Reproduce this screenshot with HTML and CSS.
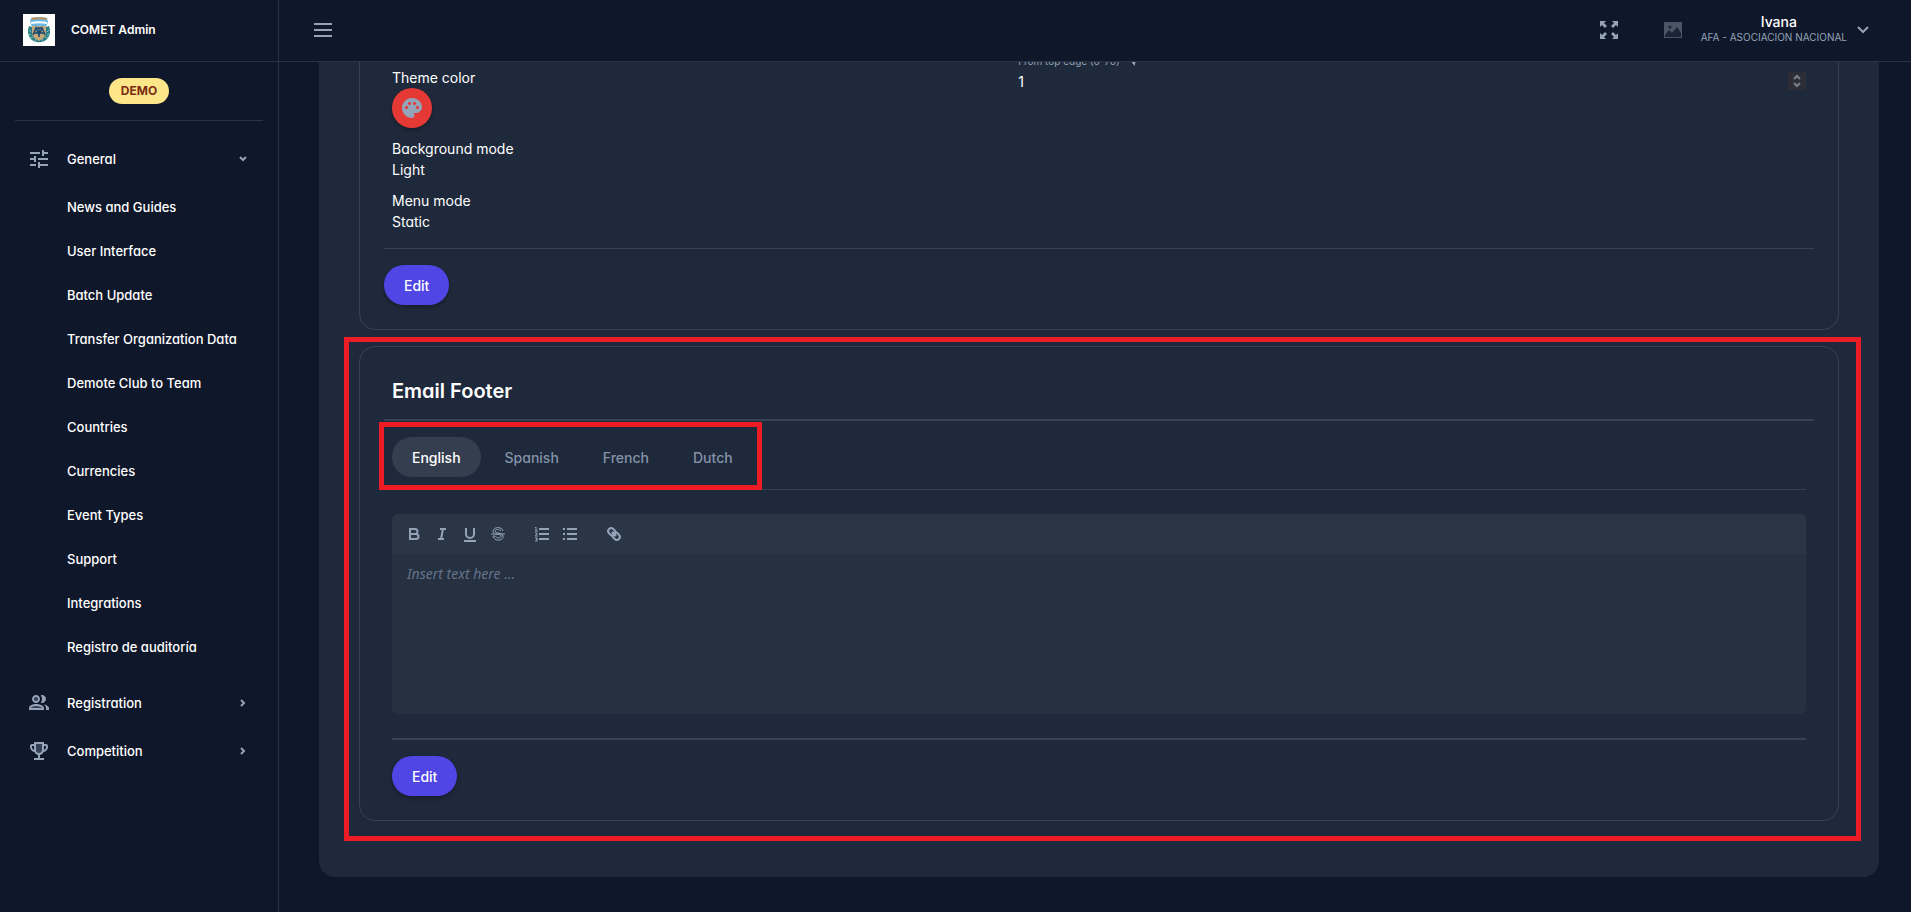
FILE: index.html
```html
<!DOCTYPE html>
<html lang="en">
<head>
    <meta charset="UTF-8">
    <meta name="viewport" content="width=device-width, initial-scale=1.0">
    <title>COMET Admin</title>
    <link rel="stylesheet" href="styles.css">
</head>
<body>
    <aside class="sidebar">
        <div class="brand">
            <svg class="brand-logo" viewBox="0 0 32 32">
                <rect width="32" height="32" fill="#fff"/>
                <path d="M6 12c-2 5-1 11 3 14 4 3 10 3 14 0 4-3 5-9 3-14l-3 1H9z" fill="#2b7f86"/>
                <path d="M8 4c3-1 13-1 16 0l1 4-2 5H9L7 8z" fill="#6db9e4"/>
                <path d="M8 4c3-1 13-1 16 0l-1 2c-4-1-10-1-14 0z" fill="#b8925a"/>
                <path d="M8 8c5-1 11-1 16 0v2c-5-1-11-1-16 0z" fill="#fff"/>
                <path d="M9 12h14v7c0 4-4 6-7 8-3-2-7-4-7-8z" fill="#c6a77a"/>
                <path d="M10 21l3-7 3 7M11 19h4M13 14h6M16 14v9M16 21l3-7 3 7M17 19h4" stroke="#174a73" stroke-width="1.5" fill="none"/>
                <path d="M6 16l2 2M5 20l3 1M7 24l3-1M12 27l1-2M20 27l-1-2M25 24l-3-1M27 20l-3 1M26 16l-2 2" stroke="#79bdbb" fill="none"/>
            </svg>
            <span class="brand-name">COMET Admin</span>
        </div>
        <div class="env"><span class="badge">DEMO</span></div>
        <nav class="menu">
            <button class="menu-group">
                <svg class="icon" viewBox="0 0 24 24"><path d="M3 17v2h6v-2H3zM3 5v2h10V5H3zm10 16v-2h8v-2h-8v-2h-2v6h2zM7 9v2H3v2h4v2h2V9H7zm14 4v-2H11v2h10zm-6-4h2V7h4V5h-4V3h-2v6z"/></svg>
                <span>General</span>
                <svg class="arrow" viewBox="0 0 16 16"><path d="M5 6l3 3 3-3"/></svg>
            </button>
            <div class="submenu">
                <a href="#">News and Guides</a>
                <a href="#">User Interface</a>
                <a href="#">Batch Update</a>
                <a href="#">Transfer Organization Data</a>
                <a href="#">Demote Club to Team</a>
                <a href="#">Countries</a>
                <a href="#">Currencies</a>
                <a href="#">Event Types</a>
                <a href="#">Support</a>
                <a href="#">Integrations</a>
                <a href="#">Registro de auditoría</a>
            </div>
            <button class="menu-group">
                <svg class="icon" viewBox="0 0 24 24"><circle cx="9" cy="8" r="2" opacity=".3"/><path opacity=".3" d="M9 15c-2.700 0-5.800 1.290-6 2.010V17h12c-.2-.71-3.300-2-6-2z"/><path d="M16.670 13.130C18.040 14.060 19 15.320 19 17v2h3v-2c0-2-3-3.300-5.330-3.870zM15 12c2.210 0 4-1.790 4-4s-1.790-4-4-4c-.47 0-.91.100-1.330.240C14.500 5.270 15 6.580 15 8s-.5 2.730-1.330 3.760c.42.140.86.240 1.330.240zM9 12c2.210 0 4-1.790 4-4s-1.790-4-4-4-4 1.790-4 4 1.790 4 4 4zm0-6c1.100 0 2 .9 2 2s-.9 2-2 2-2-.9-2-2 .9-2 2-2zM9 13c-2.670 0-7 1.340-7 4v2h15v-2c0-2.660-5.330-4-8-4zm6 4H3.500c.5-.7 3-2 5.500-2s5.800 1.300 6 2z"/></svg>
                <span>Registration</span>
                <svg class="arrow" viewBox="0 0 16 16"><path d="M6 5l3 3-3 3"/></svg>
            </button>
            <button class="menu-group">
                <svg class="icon" viewBox="0 0 24 24"><path opacity=".3" d="M8 5h8v7a4 4 0 0 1-8 0z"/><path d="M19 5h-2V3H7v2H5c-1.100 0-2 .9-2 2v1c0 2.550 1.920 4.630 4.390 4.940A5.010 5.010 0 0 0 11 15.900V19H7v2h10v-2h-4v-3.100a5.010 5.010 0 0 0 3.610-2.960C19.080 12.630 21 10.550 21 8V7c0-1.100-.9-2-2-2zM5 8V7h2v3.820C5.840 10.400 5 9.300 5 8zm10 3c0 1.650-1.350 3-3 3s-3-1.350-3-3V5h6v6zm4-3c0 1.300-.84 2.400-2 2.820V7h2v1z"/></svg>
                <span>Competition</span>
                <svg class="arrow" viewBox="0 0 16 16"><path d="M6 5l3 3-3 3"/></svg>
            </button>
        </nav>
    </aside>

    <header class="topbar">
        <button class="icon-button" aria-label="Toggle menu">
            <svg class="icon" viewBox="0 0 24 24"><path d="M3 5h18v2H3zM3 11h18v2H3zM3 17h18v2H3z"/></svg>
        </button>
        <div class="topbar-right">
            <button class="icon-button" aria-label="Full screen">
                <svg class="icon" viewBox="0 0 24 24"><path d="M3 3h6L7 5l3 3-2 2-3-3-2 2zM21 3v6l-2-2-3 3-2-2 3-3-2-2zM3 21v-6l2 2 3-3 2 2-3 3 2 2zM21 21h-6l2-2-3-3 2-2 3 3 2-2z"/></svg>
            </button>
            <button class="user">
                <svg class="avatar" viewBox="0 0 18 16"><path fill="#4b5565" d="M0 0h18v16H0z"/><circle cx="6" cy="5" r="1.500" fill="#1b2436"/><path fill="#1b2436" d="M1 13l4-5 3 3 5-6 4 6v4H1z"/></svg>
                <span class="user-text">
                    <span class="user-name">Ivana</span>
                    <span class="user-org">AFA - ASOCIACION NACIONAL</span>
                </span>
                <svg class="user-arrow" viewBox="0 0 16 16"><path d="M3 5l5 5 5-5"/></svg>
            </button>
        </div>
    </header>

    <main class="content">
        <div class="panel">
            <section class="card card-theme">
                <div class="settings">
                    <div class="settings-left">
                        <div>
                            <div>Theme color</div>
                            <button class="color-button" aria-label="Theme color">
                                <svg viewBox="0 0 24 24"><path d="M12 2C6.490 2 2 6.490 2 12s4.490 10 10 10c1.380 0 2.500-1.120 2.500-2.500 0-.61-.23-1.200-.64-1.670-.08-.1-.13-.21-.13-.33 0-.28.220-.5.500-.5H16c3.310 0 6-2.690 6-6 0-4.960-4.490-9-10-9zm-5.500 11c-.83 0-1.500-.67-1.500-1.500S5.670 10 6.500 10s1.500.67 1.500 1.500S7.330 13 6.500 13zm3-4C8.670 9 8 8.330 8 7.500S8.670 6 9.500 6s1.500.67 1.500 1.500S10.330 9 9.500 9zm5 0c-.83 0-1.500-.67-1.500-1.500S13.670 6 14.500 6s1.500.67 1.500 1.500S15.330 9 14.500 9zm3 4c-.83 0-1.500-.67-1.500-1.500s.67-1.500 1.500-1.500 1.500.67 1.500 1.500-.67 1.500-1.500 1.500z"/></svg>
                            </button>
                        </div>
                        <div>
                            <div>Background mode</div>
                            <div>Light</div>
                        </div>
                        <div>
                            <div>Menu mode</div>
                            <div>Static</div>
                        </div>
                    </div>
                    <div class="settings-right">
                        <label class="field-label" for="top-edge">From top edge (0-70)
                            <svg viewBox="0 0 12 12"><path d="M0 6l6-4 6 4-3 1-1 5-4-5z"/></svg>
                        </label>
                        <div class="number">
                            <input type="number" id="top-edge" value="1" min="0" max="70">
                            <button class="stepper" aria-label="Change value">
                                <svg viewBox="0 0 18 18"><path d="M6 7l3-3 3 3M6 11l3 3 3-3"/></svg>
                            </button>
                        </div>
                    </div>
                </div>
                <hr>
                <button class="edit">Edit</button>
            </section>

            <section class="card">
                <h2>Email Footer</h2>
                <hr class="thick">
                <div class="card-body">
                    <div class="tabs-row">
                        <div class="tabs" role="tablist">
                            <button class="tab active" role="tab">English</button>
                            <button class="tab" role="tab">Spanish</button>
                            <button class="tab" role="tab">French</button>
                            <button class="tab" role="tab">Dutch</button>
                            <div class="highlight highlight-tabs"></div>
                        </div>
                    </div>
                    <div class="editor">
                        <div class="toolbar">
                            <button aria-label="Bold"><svg viewBox="0 0 18 18"><path d="M5 4h5a2.500 2.500 0 0 1 0 5H5zM5 9h6a2.500 2.500 0 0 1 0 5H5z"/></svg></button>
                            <button aria-label="Italic"><svg viewBox="0 0 18 18"><path d="M7 4h6M5 14h6M10 4L8 14"/></svg></button>
                            <button aria-label="Underline"><svg viewBox="0 0 18 18"><path d="M5 3v6a4 4 0 0 0 8 0V3M3 16h12"/></svg></button>
                            <button aria-label="Strike"><svg viewBox="0 0 18 18"><g class="thin"><path d="M2 9h14M14 6c-1-5-10-4-10 0 0 5 8 2 8 5 0 3-5 2-6 0H4c1 6 11 5 10 0M12 6c-1-2-6-2-6 0 0 3 8 1 8 5"/></g></svg></button>
                            <button class="group-start" aria-label="Ordered list"><svg viewBox="0 0 18 18"><path d="M6 4h10M6 9h10M6 14h10"/><path class="thin" d="M3 2v4M2 3l1-1M2 6h3M2 8h2v1l-2 2h3M2 13h2v1H3h1v2H2"/></svg></button>
                            <button aria-label="Bullet list"><svg viewBox="0 0 18 18"><path d="M6 4h10M6 9h10M6 14h10M2 4h2M2 9h2M2 14h2"/></svg></button>
                            <button class="group-start" aria-label="Link"><svg viewBox="0 0 18 18"><g transform="rotate(45 9 9)"><rect x="2" y="6" width="8" height="6" rx="3"/><rect x="8" y="6" width="8" height="6" rx="3"/><path d="M6 9h6"/></g></svg></button>
                        </div>
                        <textarea placeholder="Insert text here ..." aria-label="Email footer text"></textarea>
                    </div>
                    <hr class="thick">
                    <button class="edit">Edit</button>
                </div>
                <div class="highlight highlight-card"></div>
            </section>
        </div>
    </main>
</body>
</html>
```

FILE: styles.css
```css
* {
    box-sizing: border-box;
}
body {
    margin: 0;
    min-height: 100vh;
    font-family: Inter, sans-serif;
    font-feature-settings: "cv11";
    font-size: 14px;
    line-height: 21px;
    color: #fff;
    background: #0f172a;
}
button {
    padding: 0;
    border: none;
    background: none;
    color: inherit;
    font: inherit;
    font-feature-settings: inherit;
    cursor: pointer;
}
svg {
    display: block;
    flex: none;
}
hr {
    height: 1px;
    margin: 16px 0;
    border: none;
    background: #384252;
}
hr.thick {
    height: 2px;
}
.icon {
    width: 24px;
    height: 24px;
    fill: #94a3b8;
}

/* sidebar */
.sidebar {
    position: fixed;
    top: 0;
    bottom: 0;
    left: 0;
    z-index: 3;
    width: 279px;
    border-right: 1px solid #2a3244;
    background: #0f172a;
}
.brand {
    display: flex;
    align-items: center;
    gap: 16px;
    height: 62px;
    padding: 0 23px 2px;
    border-bottom: 1px solid #2a3244;
}
.brand-logo {
    width: 32px;
    height: 32px;
}
.brand-name {
    font-size: 12px;
    font-weight: 600;
}
.env {
    margin: 0 15px;
    padding: 16px 0;
    border-bottom: 1px solid #2a3244;
    text-align: center;
}
.badge {
    display: inline-block;
    padding: 0 12px;
    border-radius: 13px;
    background: #fde68a;
    color: #7c2d12;
    font-size: 12px;
    font-weight: 700;
    line-height: 26px;
    vertical-align: top;
}
.menu {
    display: flex;
    flex-direction: column;
    gap: 4px;
    padding: 16px 12px;
    font-size: 13px;
    font-weight: 500;
}
.menu-group {
    display: flex;
    align-items: center;
    gap: 16px;
    height: 44px;
    padding: 0 15px;
    text-align: left;
}
.menu-group span {
    flex: 1;
}
.submenu {
    padding-bottom: 8px;
}
.submenu a {
    display: block;
    padding: 0 55px;
    color: #fff;
    line-height: 44px;
    text-decoration: none;
    white-space: nowrap;
}
.arrow,
.user-arrow {
    width: 16px;
    height: 16px;
    fill: none;
    stroke: #94a3b8;
    stroke-width: 2;
}

/* top bar */
.topbar {
    position: fixed;
    top: 0;
    left: 279px;
    right: 0;
    z-index: 2;
    display: flex;
    align-items: center;
    justify-content: space-between;
    height: 62px;
    padding: 0 40px 2px 32px;
    border-bottom: 1px solid #2a3244;
    background: #0f172a;
    font-feature-settings: normal;
}
.topbar-right,
.user {
    display: flex;
    align-items: center;
}
.topbar-right {
    gap: 43px;
}
.user-text {
    margin: 0 8px 0 19px;
    padding-bottom: 4px;
    text-align: center;
}
.avatar {
    width: 18px;
    height: 16px;
}
.user-name,
.user-org {
    display: block;
}
.user-name {
    padding-left: 10px;
    font-weight: 500;
    line-height: 18px;
}
.user-org {
    color: #94a3b8;
    font-size: 10px;
    line-height: 12px;
}

/* page */
.content {
    padding: 0 32px 35px 319px;
}
.panel {
    padding: 0 40px 56px;
    border-radius: 0 0 16px 16px;
    background: #1e293b;
}
.card {
    position: relative;
    margin-bottom: 16px;
    padding: 24px;
    border: 1px solid #384252;
    border-radius: 16px;
}
.card:last-child {
    margin-bottom: 0;
}
.card-theme {
    padding-top: 50px;
}
.card-body {
    padding: 0 8px;
}
.settings {
    display: grid;
    grid-template-columns: 13fr 17fr;
    gap: 24px;
    padding: 0 8px;
}
.settings-left {
    display: flex;
    flex-direction: column;
    gap: 10px;
    padding-top: 16px;
}
.color-button {
    display: flex;
    align-items: center;
    justify-content: center;
    width: 40px;
    height: 40px;
    border-radius: 50%;
    background: #e53935;
    box-shadow: 0 2px 4px rgba(0, 0, 0, 0.3);
}
.color-button svg {
    width: 24px;
    height: 24px;
    fill: #94a3b8;
}
.field-label {
    display: flex;
    align-items: center;
    gap: 8px;
    color: #94a3b8;
    font-size: 10px;
    line-height: 20px;
}
.field-label svg {
    width: 10px;
    height: 10px;
    fill: #94a3b8;
}
.number {
    display: flex;
    align-items: center;
    justify-content: space-between;
    height: 20px;
}
.number input {
    flex: 1;
    padding: 0;
    border: none;
    outline: none;
    background: none;
    color: #fff;
    font: inherit;
    appearance: textfield;
}
.stepper {
    background: #2d2d38;
}
.stepper svg {
    width: 18px;
    height: 18px;
    fill: none;
    stroke: #7d7e88;
    stroke-width: 2;
}
.edit {
    display: block;
    height: 40px;
    padding: 0 20px;
    border-radius: 20px;
    background: #4f46e5;
    font-weight: 500;
    box-shadow: 0 2px 4px rgba(0, 0, 0, 0.3);
}
h2 {
    margin: 0 8px 8px;
    font-size: 20px;
    font-weight: 600;
    line-height: 40px;
}
.card h2 + hr {
    margin-top: 0;
}

/* language tabs */
.tabs-row {
    margin-bottom: 24px;
    padding-bottom: 12px;
    border-bottom: 1px solid #384252;
}
.tabs {
    position: relative;
    display: flex;
    gap: 4px;
    width: max-content;
}
.tab {
    height: 40px;
    padding: 0 20px;
    border-radius: 20px;
    color: #8593a8;
    font-weight: 500;
}
.tab.active {
    background: #353e4f;
    color: #fff;
}

/* text editor */
.editor {
    margin-bottom: 24px;
    overflow: hidden;
    border-radius: 6px;
    background: #253040;
}
.toolbar {
    display: flex;
    align-items: center;
    height: 40px;
    padding: 0 8px;
    background: #2a3545;
}
.toolbar button {
    width: 28px;
    padding: 0 5px;
}
.toolbar .group-start {
    margin-left: 16px;
}
.toolbar svg {
    width: 18px;
    height: 18px;
    fill: none;
    stroke: #94a3b8;
    stroke-width: 2;
}
.toolbar .thin {
    stroke-width: 1;
}
textarea {
    display: block;
    width: 100%;
    height: 160px;
    padding: 10px 15px;
    border: none;
    outline: none;
    resize: none;
    background: none;
    color: #fff;
    font: 14px/20px "Noto Sans", sans-serif;
}
textarea::placeholder {
    color: #64748b;
    font-style: italic;
}

/* red marker boxes */
.highlight {
    position: absolute;
    border: 5px solid #ed1c24;
    pointer-events: none;
}
.highlight-card {
    top: -10px;
    right: -23px;
    bottom: -21px;
    left: -16px;
}
.highlight-tabs {
    top: -15px;
    right: -9px;
    bottom: -13px;
    left: -13px;
}
```
